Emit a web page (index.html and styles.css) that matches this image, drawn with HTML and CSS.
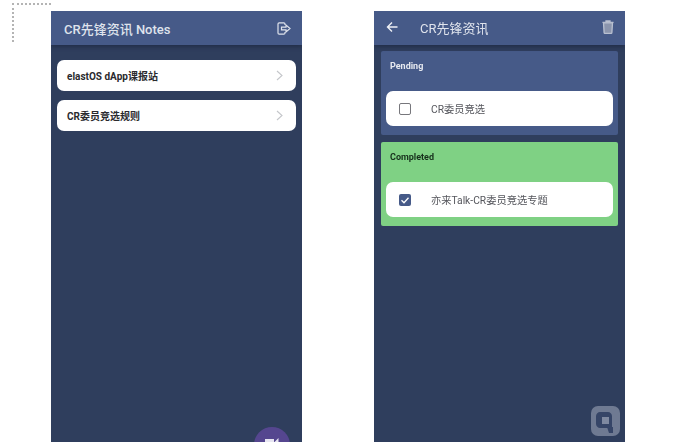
FILE: index.html
```html
<!DOCTYPE html>
<html lang="en">
<head>
    <meta charset="UTF-8">
    <title>CR notes</title>
    <link rel="stylesheet" href="styles.css">
</head>
<body>

<div class="dots"></div>

<div class="screens">
    <div class="phone">
        <div class="bar">
            <span class="bar-title">CR先锋资讯 Notes</span>
            <svg class="bar-icon" width="14" height="13" viewBox="0 0 14 13" fill="none" stroke="#dfe3ec" stroke-width="1.200">
                <path d="M8 3V2C8 1.300 7.500 .8 6.800 .8H2.200C1.500 .8 1 1.300 1 2v9c0 .7.5 1.200 1.200 1.200h4.600C7.500 12.200 8 11.700 8 11v-1"/>
                <path d="M4.500 5.200H9V3l4 3.500-4 3.500V7.800H4.500z"/>
            </svg>
        </div>
        <div class="list">
            <div class="note">
                <span>elastOS dApp课报站</span>
                <svg class="chev" width="7" height="11" viewBox="0 0 7 11" fill="none" stroke="#c4c6ca" stroke-width="1.100"><path d="M1 1l5 4.500-5 4.500"/></svg>
            </div>
            <div class="note">
                <span>CR委员竞选规则</span>
                <svg class="chev" width="7" height="11" viewBox="0 0 7 11" fill="none" stroke="#c4c6ca" stroke-width="1.100"><path d="M1 1l5 4.500-5 4.500"/></svg>
            </div>
        </div>
        <div class="fab">
            <svg width="14" height="11" viewBox="0 0 14 11" fill="#e8e6f2"><path d="M0 1h9v9H0zM9.500 4L13.500 0v9z"/></svg>
        </div>
    </div>

    <div class="phone">
        <div class="bar detail">
            <svg class="back" width="12" height="12" viewBox="0 0 12 12" fill="none" stroke="#eef0f5" stroke-width="1.400"><path d="M11.500 6H1.500M6 1.500L1.500 6 6 10.500"/></svg>
            <span class="bar-title thin">CR先锋资讯</span>
            <svg class="bar-icon" width="12" height="14" viewBox="0 0 12 14" fill="none" stroke="#b9c0d0" stroke-width="1.300">
                <path d="M.5 2.300h11M4 2.300V1h4v1.300"/>
                <path d="M1.500 2.800l.6 9.700c0 .5.4.9.9.9h6c.5 0 .9-.4.9-.9l.6-9.700z" fill="#8b95ad"/>
            </svg>
        </div>
        <div class="groups">
            <div class="group pending">
                <div class="group-title">Pending</div>
                <div class="task">
                    <span class="box"></span>
                    <span>CR委员竞选</span>
                </div>
            </div>
            <div class="group done">
                <div class="group-title">Completed</div>
                <div class="task">
                    <span class="box checked">
                        <svg width="12" height="12" viewBox="0 0 12 12" fill="none" stroke="#fff" stroke-width="1.300"><path d="M2.500 6.200l2.500 2.500 4.500-5"/></svg>
                    </span>
                    <span>亦来Talk-CR委员竞选专题</span>
                </div>
            </div>
        </div>
        <svg class="mark" width="29" height="30" viewBox="0 0 29 30">
            <rect width="29" height="30" rx="7" fill="#6f7a92"/>
            <path d="M9 6h8c2 0 4 2 4 4v12H9c-2 0-4-2-4-4V10c0-2 2-4 4-4z" fill="#364567"/>
            <path d="M16 21h6v6h-4z" fill="#364567"/>
            <rect x="11" y="11" width="7" height="7" fill="#7f89a0"/>
        </svg>
    </div>
</div>

</body>
</html>
```

FILE: styles.css
```css
*{box-sizing:border-box}
html,body{
    margin:0;
    height:100%;
    overflow:hidden;
}
body{
    background:#fff;
    font-family:Roboto,"Noto Sans CJK SC",sans-serif;
    position:relative;
}
.dots{
    position:absolute;
    left:12px;
    top:3px;
    width:39px;
    height:39px;
    border-top:2px dotted #b4b4b4;
    border-left:2px dotted #b4b4b4;
}
.screens{
    display:flex;
    gap:72px;
    padding:11px 0 0 51px;
    height:442px;
    filter:blur(.35px);
}
.phone{
    width:251px;
    height:431px;
    background:#2f3e5d;
    position:relative;
    overflow:hidden;
}
.bar{
    height:34px;
    background:#465a88;
    display:flex;
    align-items:center;
    padding:0 11px 0 12px;
    box-shadow:0 2px 4px rgba(20,28,48,.45);
    position:relative;
}
.bar.detail{padding-bottom:2px}
.bar-title{
    flex:1;
    padding-left:1px;
    color:#dfe3ec;
    font-size:13px;
    font-weight:500;
}
.bar-title.thin{
    font-weight:400;
    padding-left:22px;
}
.list{
    padding:15px 6px 0 6px;
    display:flex;
    flex-direction:column;
    gap:9px;
}
.note{
    height:31px;
    background:#fff;
    border-radius:7px;
    display:flex;
    align-items:center;
    justify-content:space-between;
    padding:0 13px 0 10px;
    font-size:10px;
    font-weight:700;
    color:#2a2a2e;
}
.fab{
    position:absolute;
    left:203px;
    top:416px;
    width:36px;
    height:36px;
    border-radius:50%;
    background:#55468f;
    display:flex;
    justify-content:center;
    padding-top:11px;
}
.groups{
    padding:6px 7px 0 7px;
    display:flex;
    flex-direction:column;
    gap:7px;
}
.group{
    height:84px;
    border-radius:2px;
    padding:10px 5px 0 5px;
}
.pending{background:#465a88;color:#e6e9f0}
.done{background:#7fd184;color:#17301c}
.group-title{
    font-size:9px;
    font-weight:700;
    padding-left:4px;
    height:30px;
}
.task{
    height:35px;
    background:#fff;
    border-radius:7px;
    display:flex;
    align-items:center;
    padding-left:13px;
    gap:20px;
    font-size:10.250px;
    color:#55565c;
}
.box{
    width:12px;
    height:12px;
    border:1.500px solid #77777c;
    border-radius:2px;
    flex:none;
}
.box.checked{
    background:#465a88;
    border:none;
}
.box svg{display:block}
.mark{
    position:absolute;
    left:217px;
    top:395px;
}
```
